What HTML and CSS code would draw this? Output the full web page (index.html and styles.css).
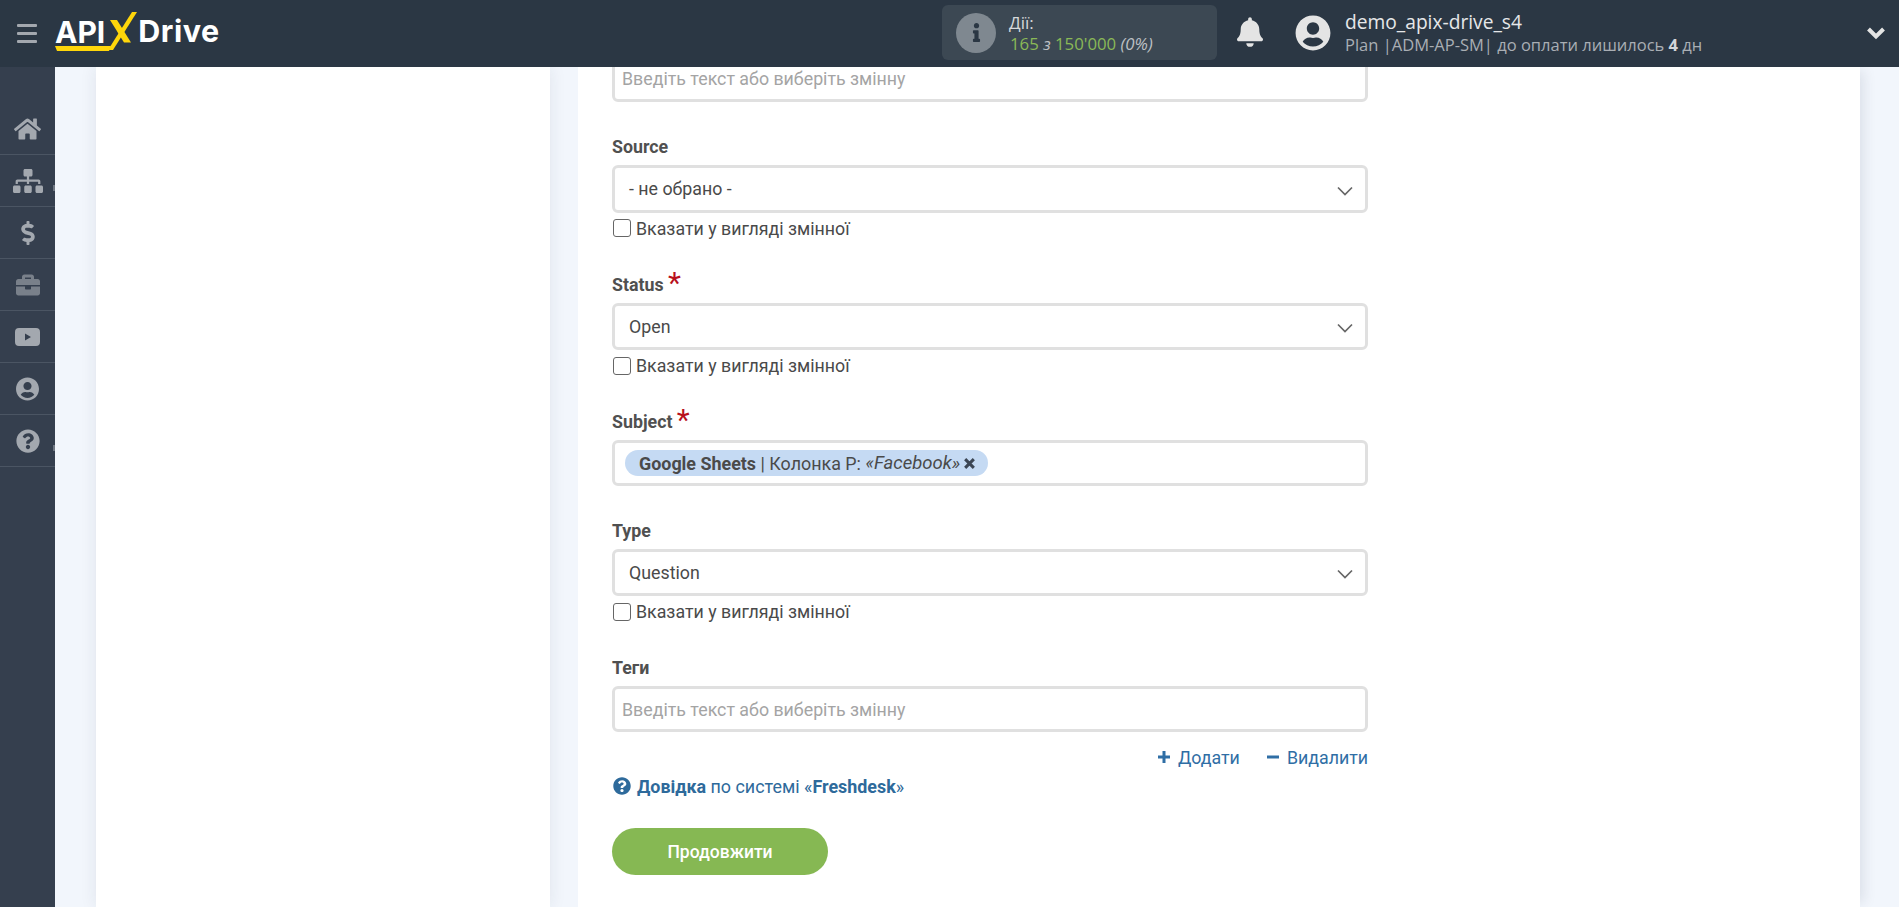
FILE: index.html
```html
<!DOCTYPE html>
<html lang="uk">
<head>
<meta charset="utf-8">
<title>ApiX-Drive</title>
<link rel="stylesheet" href="styles.css">
</head>
<body>
<header class="topbar">
  <button class="burger" aria-label="menu"><span></span><span></span><span></span></button>
  <div class="logo">
    <span class="logo-api">API</span>
    <svg class="logo-x" viewBox="0 0 29 38"><path d="M2 8h7l14 22.500h-7z" fill="#ffd60a"/><path d="M24 0h5L5 38H0z" fill="#ffd60a"/></svg>
    <span class="logo-drive">Drive</span>
    <svg class="logo-under" viewBox="0 0 56 5"><path d="M0 0h56l-2 5H2z" fill="#ffd60a"/></svg>
  </div>
  <div class="actions">
    <span class="actions-icon"><svg viewBox="0 0 192 512"><path fill="#2b3744" d="M20 424.229h20V279.771H20c-11.046 0-20-8.954-20-20V212c0-11.046 8.954-20 20-20h112c11.046 0 20 8.954 20 20v212.229h20c11.046 0 20 8.954 20 20V492c0 11.046-8.954 20-20 20H20c-11.046 0-20-8.954-20-20v-47.771c0-11.046 8.954-20 20-20zM96 0C56.235 0 24 32.235 24 72s32.235 72 72 72 72-32.236 72-72S135.764 0 96 0z"/></svg></span>
    <div class="actions-text">
      <div class="actions-title">Дії:</div>
      <div class="actions-count"><span class="green">165</span> <i>з</i> <span class="green">150'000</span> <i>(0%)</i></div>
    </div>
  </div>
  <svg class="bell" viewBox="0 0 448 512"><path fill="#e4e4e4" d="M224 512c35.32 0 63.97-28.65 63.97-64H160.03c0 35.35 28.65 64 63.97 64zm215.39-149.71c-19.32-20.76-55.47-51.99-55.47-154.29 0-77.7-54.48-139.9-127.94-155.16V32c0-17.67-14.32-32-31.98-32s-31.98 14.33-31.98 32v20.84C118.56 68.1 64.08 130.3 64.08 208c0 102.3-36.15 133.53-55.47 154.29-6 6.45-8.66 14.16-8.61 21.71.11 16.4 12.98 32 32.1 32h383.8c19.12 0 32-15.6 32.1-32 .05-7.55-2.61-15.27-8.61-21.71z"/></svg>
  <svg class="avatar" viewBox="0 0 496 512"><path fill="#e4e4e4" d="M248 8C111 8 0 119 0 256s111 248 248 248 248-111 248-248S385 8 248 8zm0 96c48.6 0 88 39.4 88 88s-39.4 88-88 88-88-39.4-88-88 39.4-88 88-88zm0 344c-58.7 0-111.3-26.6-146.5-68.2 18.8-35.4 55.6-59.8 98.5-59.8 2.4 0 4.8.4 7.1 1.1 13 4.2 26.6 6.9 40.9 6.9 14.3 0 28-2.7 40.9-6.9 2.3-.7 4.7-1.1 7.1-1.1 42.9 0 79.7 24.4 98.5 59.8C359.3 421.4 306.7 448 248 448z"/></svg>
  <div class="user">
    <div class="user-name">demo_apix-drive_s4</div>
    <div class="user-plan">Plan |ADM-AP-SM| до оплати лишилось <b>4</b> дн</div>
  </div>
  <svg class="user-chevron" viewBox="0 0 20 14"><path d="M2.500 3l7.500 7.500L17.500 3" fill="none" stroke="#e4e4e4" stroke-width="4"/></svg>
</header>
<div class="page">
  <nav class="sidebar">
    <a class="nav-item"><svg class="i-home" viewBox="0 0 576 512"><path d="M280.37 148.26L96 300.11V464a16 16 0 0 0 16 16l112.06-.29a16 16 0 0 0 15.92-16V368a16 16 0 0 1 16-16h64a16 16 0 0 1 16 16v95.64a16 16 0 0 0 16 16.05L464 480a16 16 0 0 0 16-16V300L295.67 148.26a12.19 12.19 0 0 0-15.3 0zM571.6 251.47L488 182.56V44.05a12 12 0 0 0-12-12h-56a12 12 0 0 0-12 12v72.61L318.47 43a48 48 0 0 0-61 0L4.34 251.47a12 12 0 0 0-1.6 16.9l25.5 31A12 12 0 0 0 45.15 301l235.22-193.74a12.19 12.19 0 0 1 15.3 0L530.9 301a12 12 0 0 0 16.9-1.6l25.5-31a12 12 0 0 0-1.7-16.93z"/></svg></a>
    <a class="nav-item nav-tick"><svg class="i-site" viewBox="0 0 640 512"><path d="M128 352H32c-17.67 0-32 14.33-32 32v96c0 17.67 14.33 32 32 32h96c17.67 0 32-14.33 32-32v-96c0-17.67-14.33-32-32-32zm-24-80h192v48h48v-48h192v48h48v-57.59c0-21.17-17.23-38.41-38.41-38.41H344v-64h40c17.67 0 32-14.33 32-32V32c0-17.67-14.33-32-32-32H256c-17.67 0-32 14.33-32 32v96c0 17.67 14.33 32 32 32h40v64H94.41C73.23 224 56 241.23 56 262.41V320h48v-48zm264 80h-96c-17.67 0-32 14.33-32 32v96c0 17.67 14.33 32 32 32h96c17.67 0 32-14.33 32-32v-96c0-17.67-14.33-32-32-32zm240 0h-96c-17.67 0-32 14.33-32 32v96c0 17.67 14.33 32 32 32h96c17.67 0 32-14.33 32-32v-96c0-17.67-14.33-32-32-32z"/></svg></a>
    <a class="nav-item"><svg class="i-dollar" viewBox="0 0 288 512"><path d="M209.2 233.4l-108-31.6C88.7 198.2 80 186.5 80 173.5c0-16.3 13.2-29.5 29.5-29.5h66.3c12.2 0 24.2 3.7 34.2 10.5 6.1 4.1 14.3 3.1 19.5-2l34.8-34c7.1-6.9 6.1-18.4-1.8-24.5C238 74.8 207.4 64.1 176 64V16c0-8.8-7.2-16-16-16h-32c-8.8 0-16 7.2-16 16v48h-2.5C45.8 64-5.4 118.7.5 183.6c4.2 46.1 39.4 83.6 83.8 96.6l102.5 30c12.5 3.7 21.2 15.3 21.2 28.3 0 16.3-13.2 29.5-29.5 29.5h-66.3C100 368 88 364.3 78 357.5c-6.1-4.1-14.3-3.1-19.5 2l-34.8 34c-7.1 6.9-6.1 18.4 1.8 24.5 24.5 19.2 55.1 29.9 86.5 30v48c0 8.8 7.2 16 16 16h32c8.8 0 16-7.2 16-16v-48.2c46.6-.9 90.3-28.6 105.7-72.7 21.5-61.6-14.6-124.8-72.5-141.7z"/></svg></a>
    <a class="nav-item"><svg class="i-brief" viewBox="0 0 512 512"><path d="M320 336c0 8.84-7.16 16-16 16h-96c-8.84 0-16-7.16-16-16v-48H0v144c0 25.6 22.4 48 48 48h416c25.6 0 48-22.4 48-48V288H320v48zm144-208h-80V80c0-25.6-22.4-48-48-48H176c-25.6 0-48 22.4-48 48v48H48c-25.6 0-48 22.4-48 48v80h512v-80c0-25.6-22.4-48-48-48zm-144 0H192V96h128v32z"/></svg></a>
    <a class="nav-item"><svg class="i-yt" viewBox="0 0 25 18"><path fill-rule="evenodd" d="M4 0h17a4 4 0 0 1 4 4v10a4 4 0 0 1-4 4H4a4 4 0 0 1-4-4V4a4 4 0 0 1 4-4zM10 5.500v7l6-3.500z"/></svg></a>
    <a class="nav-item"><svg class="i-user" viewBox="0 0 496 512"><path d="M248 8C111 8 0 119 0 256s111 248 248 248 248-111 248-248S385 8 248 8zm0 96c48.6 0 88 39.4 88 88s-39.4 88-88 88-88-39.4-88-88 39.4-88 88-88zm0 344c-58.7 0-111.3-26.6-146.5-68.2 18.8-35.4 55.6-59.8 98.5-59.8 2.4 0 4.8.4 7.1 1.1 13 4.2 26.6 6.9 40.9 6.9 14.3 0 28-2.7 40.9-6.9 2.3-.7 4.7-1.1 7.1-1.1 42.9 0 79.7 24.4 98.5 59.8C359.3 421.4 306.7 448 248 448z"/></svg></a>
    <a class="nav-item nav-tick"><svg class="i-help" viewBox="0 0 512 512"><path d="M504 256c0 136.997-111.043 248-248 248S8 392.997 8 256C8 119.083 119.043 8 256 8s248 111.083 248 248zM262.655 90c-54.497 0-89.255 22.957-116.549 63.758-3.536 5.286-2.353 12.415 2.715 16.258l34.699 26.31c5.205 3.947 12.621 3.008 16.665-2.122 17.864-22.658 30.113-35.797 57.303-35.797 20.429 0 45.698 13.148 45.698 32.958 0 14.976-12.363 22.667-32.534 33.976C247.128 238.528 216 254.941 216 296v4c0 6.627 5.373 12 12 12h56c6.627 0 12-5.373 12-12v-1.333c0-28.462 83.186-29.647 83.186-106.667 0-58.002-60.165-102-116.531-102zM256 338c-25.365 0-46 20.635-46 46 0 25.364 20.635 46 46 46s46-20.636 46-46c0-25.365-20.635-46-46-46z"/></svg></a>
  </nav>
  <main class="content">
    <section class="card card-left"></section>
    <section class="card card-main">
      <form class="form">
        <div class="field-first"><div class="input placeholder">Введіть текст або виберіть змінну</div></div>

        <div class="field field-select">
          <label class="label">Source</label>
          <div class="select">- не обрано -<svg class="chev" viewBox="0 0 16 10"><path d="M1 1.500l7 7 7-7" fill="none" stroke="#666" stroke-width="1.700"/></svg></div>
          <label class="check"><span class="box"></span>Вказати у вигляді змінної</label>
        </div>

        <div class="field field-select">
          <label class="label">Status <span class="req">*</span></label>
          <div class="select">Open<svg class="chev" viewBox="0 0 16 10"><path d="M1 1.500l7 7 7-7" fill="none" stroke="#666" stroke-width="1.700"/></svg></div>
          <label class="check"><span class="box"></span>Вказати у вигляді змінної</label>
        </div>

        <div class="field field-tag">
          <label class="label">Subject <span class="req">*</span></label>
          <div class="input tags"><span class="tag"><b>Google Sheets</b> | Колонка P: <i>«Facebook»</i><svg class="tag-x" viewBox="0 0 12 12"><path d="M2 2l8 8M10 2l-8 8" stroke="#3c4654" stroke-width="2.800" fill="none"/></svg></span></div>
        </div>

        <div class="field field-select">
          <label class="label">Type</label>
          <div class="select">Question<svg class="chev" viewBox="0 0 16 10"><path d="M1 1.500l7 7 7-7" fill="none" stroke="#666" stroke-width="1.700"/></svg></div>
          <label class="check"><span class="box"></span>Вказати у вигляді змінної</label>
        </div>

        <div class="field field-last">
          <label class="label">Теги</label>
          <div class="input placeholder">Введіть текст або виберіть змінну</div>
        </div>

        <div class="add-row">
          <a class="link"><svg class="pm" viewBox="0 0 14 14"><path d="M7 1v12M1 7h12" stroke="#2f6ea5" stroke-width="3" fill="none"/></svg>Додати</a>
          <a class="link"><svg class="pm" viewBox="0 0 14 14"><path d="M1 7h12" stroke="#2f6ea5" stroke-width="3" fill="none"/></svg>Видалити</a>
        </div>

        <div class="help"><svg class="help-i" viewBox="0 0 512 512"><path fill="#2e6a9b" d="M504 256c0 136.997-111.043 248-248 248S8 392.997 8 256C8 119.083 119.043 8 256 8s248 111.083 248 248zM262.655 90c-54.497 0-89.255 22.957-116.549 63.758-3.536 5.286-2.353 12.415 2.715 16.258l34.699 26.31c5.205 3.947 12.621 3.008 16.665-2.122 17.864-22.658 30.113-35.797 57.303-35.797 20.429 0 45.698 13.148 45.698 32.958 0 14.976-12.363 22.667-32.534 33.976C247.128 238.528 216 254.941 216 296v4c0 6.627 5.373 12 12 12h56c6.627 0 12-5.373 12-12v-1.333c0-28.462 83.186-29.647 83.186-106.667 0-58.002-60.165-102-116.531-102zM256 338c-25.365 0-46 20.635-46 46 0 25.364 20.635 46 46 46s46-20.636 46-46c0-25.365-20.635-46-46-46z"/></svg><b>Довідка</b>&nbsp;по системі «<b>Freshdesk</b>»</div>

        <button type="button" class="submit">Продовжити</button>
      </form>
    </section>
  </main>
</div>
</body>
</html>
```
FILE: styles.css
```css
* { box-sizing: border-box; }
html, body { margin: 0; height: 100%; overflow: hidden; }
body { font-family: Roboto, "Liberation Sans", sans-serif; color: #4a4a4a; background: #f2f6fc; }

.topbar { height: 67px; background: #2b3744; display: flex; align-items: center; position: relative; z-index: 1; }
.burger { width: 20px; height: 19px; margin-left: 17px; padding: 0; border: 0; background: none; display: flex; flex-direction: column; justify-content: space-between; }
.burger span { display: block; height: 3px; width: 20px; background: #a3a8af; border-radius: 1px; }

.logo { position: relative; width: 168px; height: 44px; margin-left: 18px; display: flex; align-items: center; color: #fff; font-family: Inter, sans-serif; font-weight: 700; }
.logo-api { font-size: 30px; line-height: 1; margin-top: -4px; }
.logo-drive { font-size: 30.500px; letter-spacing: .5px; line-height: 1; margin-top: -4px; margin-left: 1px; }
.logo-x { width: 29px; height: 38px; margin-left: 3px; align-self: flex-start; flex: none; }
.logo-under { position: absolute; left: 0; top: 34px; width: 56px; height: 5px; }

.actions { position: absolute; left: 942px; top: 5px; width: 275px; height: 55px; background: #3c4853; border-radius: 6px; display: flex; align-items: center; padding-left: 14px; }
.actions-icon { width: 40px; height: 40px; border-radius: 50%; background: #7f8890; display: flex; align-items: center; justify-content: center; }
.actions-icon svg { width: 13px; height: 19px; }
.actions-text { margin-left: 13px; font-family: "Open Sans", sans-serif; line-height: 21px; color: #d6d8da; }
.actions-title { font-size: 17px; }
.actions-count { font-size: 16.800px; color: #bcc0c4; padding-left: 1px; }
.green { color: #8ab957; }

.bell { position: absolute; left: 1237px; top: 17px; width: 26px; height: 30px; }
.avatar { position: absolute; left: 1295px; top: 15px; width: 36px; height: 36px; }
.user { position: absolute; left: 1345px; top: 9px; font-family: "Open Sans", sans-serif; white-space: nowrap; }
.user-name { font-size: 19.200px; line-height: 26px; color: #e6e7e9; }
.user-plan { font-size: 16.500px; line-height: 20px; color: #a9aeb4; }
.user-plan b { color: #d3d5d8; }
.user-chevron { position: absolute; left: 1866px; top: 26px; width: 20px; height: 14px; }

.page { height: 840px; display: flex; }
.sidebar { width: 55px; flex: none; background: #353f4e; padding-top: 36px; display: flex; flex-direction: column; }
.nav-item { height: 52px; flex: none; display: flex; align-items: center; justify-content: center; border-bottom: 1px solid #4b5563; position: relative; }
.nav-item svg { fill: #a3a8af; display: block; }
.nav-tick::after { content: ""; position: absolute; right: 0; top: 30px; width: 2px; height: 6px; background: #6f7782; }
.i-home { width: 27px; height: 24px; }
.i-site { width: 30px; height: 24px; }
.i-dollar { width: 14px; height: 24px; }
.i-brief { width: 24px; height: 24px; opacity: .62; }
.i-yt { width: 25px; height: 18px; }
.i-user { width: 23px; height: 24px; }
.i-help { width: 24px; height: 24px; }

.content { flex: 1; display: flex; min-width: 0; padding: 0 39px 0 41px; gap: 28px; overflow: hidden; }
.card { background: #fff; }
.card-left { width: 454px; flex: none; box-shadow: 0 0 16px rgba(30, 40, 70, .09); }
.card-main { flex: 1; padding-left: 34px; box-shadow: 8px 0 12px -4px rgba(30, 40, 70, .1); }

.form { width: 756px; margin-top: -11.500px; }
.input, .select { border: 3px solid #e0e0e0; border-radius: 6px; background: #fff; font-size: 17.800px; color: #4a4a4a; }
.input { height: 46px; display: flex; align-items: center; padding-left: 7px; }
.input.placeholder { color: #a4a4a4; }
.select { height: 47.500px; display: flex; align-items: center; justify-content: space-between; padding: 0 12px 0 14px; }
.chev { width: 16px; height: 10px; margin-top: 4px; }
.label { display: block; font-size: 17.800px; font-weight: 700; color: #505050; line-height: 26px; height: 25px; margin-bottom: 6px; }
.req { color: #b8101c; font-size: 30px; font-weight: 400; line-height: 20px; vertical-align: -2px; }
.field-first { height: 46px; margin-bottom: 32.500px; }
.field-select { height: 137.500px; }
.field-tag { height: 108.500px; }
.check { display: flex; align-items: center; height: 28px; font-size: 17.800px; color: #4a4a4a; margin-top: 1.500px; }
.box { width: 18px; height: 18px; border: 1.500px solid #666; border-radius: 3px; margin-right: 5px; margin-left: 1px; background: #fff; }
.tags { padding-left: 10px; }
.tag { display: inline-flex; align-items: center; height: 26px; background: #c5daf3; border-radius: 13px; padding: 0 12px 0 14px; color: #4a4a4a; font-size: 17.900px; white-space: pre; }
.tag b { font-weight: 700; }
.tag i { font-size: 18.500px; }
.tag-x { width: 13px; height: 13px; margin-left: 3px; }
.add-row { display: flex; justify-content: flex-end; gap: 26px; margin-top: 15px; height: 20px; }
.link { display: flex; align-items: center; color: #2f6ea5; font-size: 17.800px; }
.pm { width: 14px; height: 14px; margin-right: 7px; }
.help { display: flex; align-items: center; margin-top: 7px; color: #2e6a9b; font-size: 17.900px; height: 24px; }
.help-i { width: 18px; height: 18px; margin-right: 6px; margin-left: 1px; }
.submit { display: block; margin-top: 30px; width: 216px; height: 47px; border: 0; border-radius: 24px; background: #86b853; color: #fff; font-family: Roboto, sans-serif; font-size: 17.500px; font-weight: 500; }
```
